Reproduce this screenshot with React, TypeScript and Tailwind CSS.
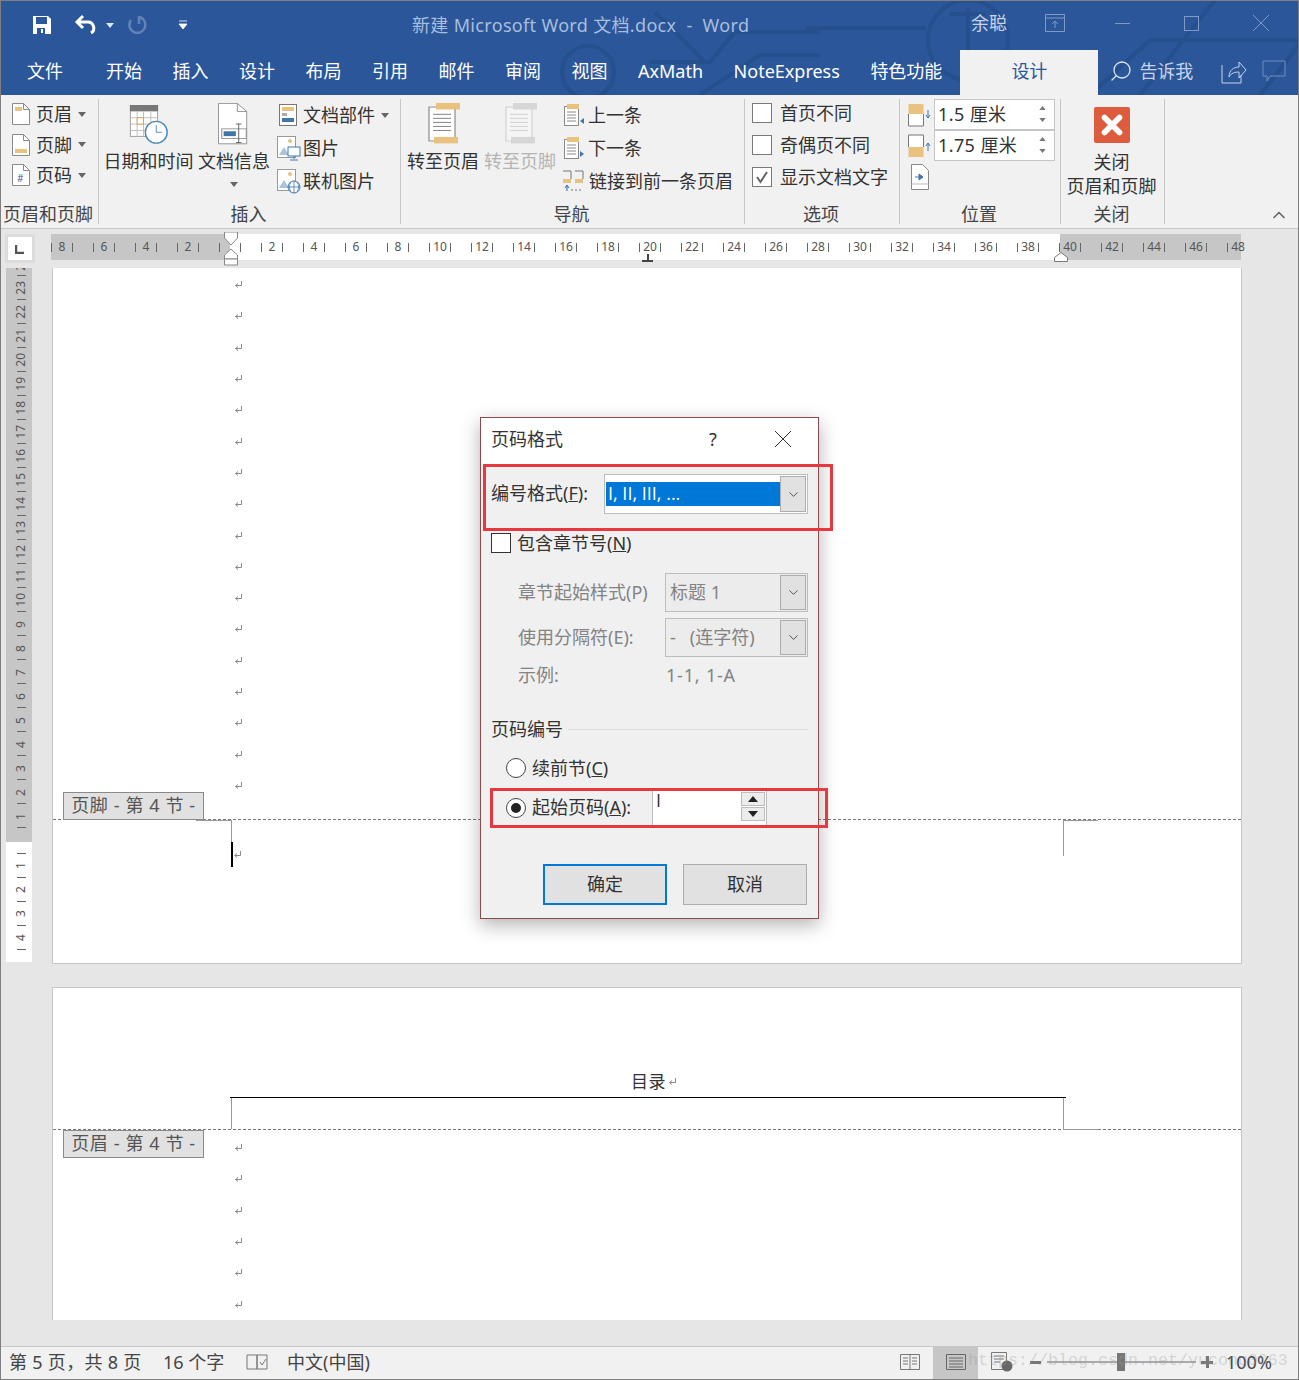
import React from "react";
import { ChevronDown, ChevronUp, X, Search } from "lucide-react";

const tabs = ["开始", "插入", "设计", "布局", "引用", "邮件", "审阅", "视图", "AxMath", "NoteExpress", "特色功能"];
const rulerNums = [8, 6, 4, 2, 0, 2, 4, 6, 8, 10, 12, 14, 16, 18, 20, 22, 24, 26, 28, 30, 32, 34, 36, 38, 40, 42, 44, 46, 48];
const sideNums = [24, 23, 22, 21, 20, 19, 18, 17, 16, 15, 14, 13, 12, 11, 10, 9, 8, 7, 6, 5, 4, 3, 2, 1];

const Caret = ({ color = "#666" }: { color?: string }) => (
  <svg width="8" height="5" viewBox="0 0 8 5" className="shrink-0">
    <path d="M0 0h8L4 5z" fill={color} />
  </svg>
);

const ParaMark = () => (
  <svg width="9" height="9" viewBox="0 0 9 9" className="shrink-0">
    <path d="M7.5 1v4.5H2M4 3.5 1.5 5.5 4 7.5" fill="none" stroke="#8a8a8a" strokeWidth="1" />
  </svg>
);

const PageIcon = ({ band, hash }: { band?: "top" | "bottom"; hash?: boolean }) => (
  <svg width="18" height="22" viewBox="0 0 18 22" className="shrink-0">
    <path d="M.5.5h11l6 6v15H.5z" fill="#fff" stroke="#8a8a8a" />
    <path d="M11.500.5v6h6" fill="none" stroke="#8a8a8a" />
    {band === "top" && <rect x="3" y="4" width="7" height="4" fill="#e8c27e" />}
    {band === "bottom" && <rect x="3" y="15" width="12" height="4" fill="#e8c27e" />}
    {hash && <text x="5" y="18" fontSize="10" fill="#2b6cb0">#</text>}
  </svg>
);

const SmallDoc = ({ up }: { up: boolean }) => (
  <svg width="20" height="24" viewBox="0 0 20 24" className="shrink-0">
    <rect x=".5" y="3.500" width="14" height="19" fill="#fff" stroke="#8a8a8a" />
    <rect x="3" y="1" width="12" height="5" fill="#e8c27e" />
    <path d="M3 9h9M3 12h9M3 15h9M3 18h9" stroke="#8a8a8a" />
    <path d={up ? "M20 15v6l-4-3z" : "M16 15v6l4-3z"} fill="#3f77ad" />
  </svg>
);

const BigDoc = ({ dim }: { dim?: boolean }) => (
  <svg width="34" height="42" viewBox="0 0 34 52" preserveAspectRatio="none" className={dim ? "-mt-[2px] shrink-0 opacity-30" : "-mt-[2px] shrink-0"}>
    <rect x="3" y="5" width="26" height="42" fill="#fff" stroke="#777" />
    <rect x="10" y="0" width="24" height="8" fill={dim ? "#999" : "#e8c27e"} />
    <rect x="8" y="42" width="24" height="8" fill={dim ? "#999" : "#e8c27e"} />
    <path d="M7 14h18M7 19h18M7 24h18M7 29h18M7 34h18" stroke="#777" />
  </svg>
);

const ImageIcon = ({ kind }: { kind: "screen" | "globe" }) => (
  <svg width="24" height="26" viewBox="0 0 24 26" className="-ml-[2px] shrink-0">
    <rect x=".5" y="1.500" width="18" height="21" fill="#fff" stroke="#9a9a9a" />
    <circle cx="13" cy="6" r="2" fill="#e8c27e" />
    <path d="M2 20l5-8 5 8z" fill="#a8c3de" />
    {kind === "screen" ? (
      <>
        <rect x="11" y="12" width="12" height="9" fill="#fff" stroke="#3f77ad" />
        <path d="M17 21v3M13 25h8" stroke="#3f77ad" />
      </>
    ) : (
      <>
        <circle cx="17" cy="19" r="6" fill="#fff" stroke="#3f77ad" />
        <path d="M11 19h12M17 13v12M14 14c-2 3-2 7 0 10M20 14c2 3 2 7 0 10" fill="none" stroke="#3f77ad" strokeWidth=".8" />
      </>
    )}
  </svg>
);

const Spin = () => (
  <div className="mr-[3px] flex h-full w-[17px] flex-col items-center justify-center gap-[8px]">
    <svg width="7" height="4" viewBox="0 0 8 5"><path d="M0 5h8L4 0z" fill="#777" /></svg>
    <svg width="7" height="4" viewBox="0 0 8 5"><path d="M0 0h8L4 5z" fill="#777" /></svg>
  </div>
);

const RibbonGroup = ({ label, width, children }: { label: string; width: string; children: React.ReactNode }) => (
  <div className={`flex h-[125px] shrink-0 flex-col border-r border-[#c6c6c6] ${width}`}>
    <div className="h-[105px]">{children}</div>
    <div className="flex h-[20px] items-center justify-center whitespace-nowrap pr-[2px] text-[#444]">{label}</div>
  </div>
);

const Check = ({ label, checked }: { label: string; checked?: boolean }) => (
  <div className="flex h-[32px] items-center gap-[8px] whitespace-nowrap">
    <div className="flex h-[20px] w-[20px] items-center justify-center border border-[#7a7a7a] bg-white">
      {checked && (
        <svg width="14" height="14" viewBox="0 0 14 14"><path d="M2 7l3.500 5L12 2" fill="none" stroke="#666" strokeWidth="2" /></svg>
      )}
    </div>
    {label}
  </div>
);

const Combo = ({ children, width, disabled }: { children: React.ReactNode; width: string; disabled?: boolean }) => (
  <div className={`flex h-[39px] items-center border border-[#bdbdbd] ${width} ${disabled ? "bg-[#ececec]" : "bg-white"}`}>
    <div className="flex-1 whitespace-nowrap pb-[1px] pl-[4px]">{children}</div>
    <div className="mr-px flex h-[35px] w-[26px] items-center justify-center border border-[#adadad] bg-[#e1e1e1]">
      <ChevronDown size={15} strokeWidth={1.3} color="#333" />
    </div>
  </div>
);

const Radio = ({ checked }: { checked?: boolean }) => (
  <div className="flex h-[20px] w-[20px] items-center justify-center rounded-full border border-[#444] bg-white">
    {checked && <div className="h-[10px] w-[10px] rounded-full bg-[#222]" />}
  </div>
);

const MarkRows = ({ count }: { count: number }) => (
  <>
    {Array.from({ length: count }).map((_, i) => (
      <div key={i} className="flex h-[31.3px] items-center pl-[181px]">
        <ParaMark />
      </div>
    ))}
  </>
);

const SectionTag = ({ text, pos }: { text: string; pos: string }) => (
  <div className={`absolute left-[10px] flex h-[28px] w-[141px] items-center justify-center border border-[#8a8a8a] bg-[#e1e1e1] pb-[2px] whitespace-nowrap tracking-[0.6px] text-[#555] ${pos}`}>
    {text}
  </div>
);

export default function App() {
  return (
    <div className="relative h-[1380px] w-[1299px] overflow-hidden bg-[#e6e6e6] font-['Noto_Sans','Noto_Sans_CJK_SC',sans-serif] text-[18px] leading-none text-[#333]">
      {/* title bar + tabs */}
      <div className="relative h-[95px] bg-[#2b579a]">
        <svg width="1299" height="95" className="absolute left-0 top-0" fill="none" stroke="#264f8e" strokeWidth="4">
          <circle cx="588" cy="72" r="26" />
          <circle cx="968" cy="40" r="40" />
          <path d="M968 8v60M950 14h36" />
          <path d="M655 12l50 50M650 62h60l25-30h85M806 28h120M1090 95l60-55h149M1140 95l75-95M1260 95l39-50M700 95l60-40h60" />
        </svg>
        <div className="relative flex h-[50px] items-center">
          <div className="flex w-[412px] items-center pl-[32px]">
            <svg width="20" height="20" viewBox="0 0 20 20" className="shrink-0">
              <path d="M1 1h15l3 3v15H1z" fill="#fff" />
              <rect x="4" y="2" width="11" height="7" fill="#2b579a" />
              <rect x="5" y="13" width="8" height="6" fill="#2b579a" />
              <rect x="9" y="14" width="2" height="4" fill="#fff" />
            </svg>
            <svg width="24" height="24" viewBox="0 0 24 24" className="ml-[22px] shrink-0" fill="none" stroke="#fff" strokeWidth="3">
              <path d="M9 3 3 9l6 6M3 9h10a6 6 0 0 1 4 11" />
            </svg>
            <div className="ml-[8px]"><Caret color="#dfe7f2" /></div>
            <svg width="22" height="22" viewBox="0 0 22 22" className="ml-[12px] shrink-0" fill="none" stroke="#6283b5" strokeWidth="2.5">
              <path d="M13 2v8M13 3a8 8 0 1 1-8 3" />
            </svg>
            <svg width="10" height="10" viewBox="0 0 10 10" className="ml-[30px] shrink-0">
              <path d="M1 1h8M1 4h8L5 9z" fill="#fff" stroke="#fff" strokeWidth=".8" />
            </svg>
          </div>
          <div className="w-[559px] whitespace-pre tracking-[0.33px] text-[#a9bedd]">新建 Microsoft Word 文档.docx  -  Word</div>
          <div className="flex items-center pb-[4px]">
            <div className="w-[76px] text-[#c6d3e8]">余聪</div>
            <svg width="20" height="18" viewBox="0 0 20 18" fill="none" stroke="#7f9ac4" className="-ml-[2px] shrink-0">
              <path d="M.5.5h19v17H.5zM.5 4h19M10 14V7M7 10l3-3 3 3" />
            </svg>
            <div className="ml-[50px] h-px w-[15px] bg-[#7f9ac4]" />
            <div className="ml-[54px] h-[15px] w-[15px] border border-[#7f9ac4]" />
            <svg width="18" height="18" viewBox="0 0 18 18" fill="none" stroke="#7f9ac4" className="ml-[53px] shrink-0">
              <path d="M1 1l16 16M17 1 1 17" />
            </svg>
          </div>
        </div>
        <div className="relative flex h-[45px] items-center pb-[3px] pl-[27px] text-[#fff]">
          <div className="mr-[43px]">文件</div>
          <div className="flex items-center gap-[30.5px] whitespace-nowrap">
            {tabs.map((t) => (
              <div key={t}>{t}</div>
            ))}
          </div>
          <div className="-mb-[3px] ml-[18px] flex h-[45px] w-[138px] items-center justify-center bg-[#f1f1f1] pb-[3px] text-[#2b579a]">设计</div>
          <Search size={24} strokeWidth={1.3} color="#dfe7f2" className="ml-[11px] -scale-x-100" />
          <div className="ml-[6px] text-[#c6d3e8]">告诉我</div>
          <svg width="26" height="26" viewBox="0 0 26 26" fill="none" stroke="#c6d3e8" className="ml-[28px] shrink-0">
            <path d="M1 7v18h19v-8M8 19c0-7 5-10 10-10V4l7 8-7 8v-6c-4 0-8 1-10 5z" />
          </svg>
          <svg width="24" height="22" viewBox="0 0 24 22" fill="none" stroke="#6f8dbc" className="ml-[15px] shrink-0">
            <path d="M1 1h22v15H8l-3 5v-5H1z" />
          </svg>
        </div>
      </div>

      {/* ribbon */}
      <div className="relative flex h-[133px] bg-[#f1f1f1] pt-[4px]">
        <RibbonGroup label="页眉和页脚" width="w-[99px]">
          <div className="flex flex-col pl-[12px]">
            <div className="flex h-[31px] items-center gap-[6px] pb-[1px]"><PageIcon band="top" />页眉<Caret /></div>
            <div className="flex h-[30px] items-center gap-[6px] pb-[1px]"><PageIcon band="bottom" />页脚<Caret /></div>
            <div className="flex h-[31px] items-center gap-[6px] pb-[1px]"><PageIcon hash />页码<Caret /></div>
          </div>
        </RibbonGroup>
        <RibbonGroup label="插入" width="w-[302px]">
          <div className="flex pt-[6px] pl-[5px]">
            <div className="flex w-[89px] flex-col items-center whitespace-nowrap">
              <svg width="42" height="40" viewBox="0 0 42 44" className="shrink-0">
                <rect x=".5" y=".5" width="30" height="34" fill="#fff" stroke="#999" />
                <rect x="0" y="0" width="31" height="7" fill="#777" />
                <path d="M.5 14h30M.5 21h30M.5 28h30M8 7v27M15 7v27M23 7v27" stroke="#bbb" />
                <rect x="8" y="14" width="7" height="7" fill="#fff" stroke="#e39a3c" />
                <circle cx="29" cy="30" r="12" fill="#fff" stroke="#4a86b8" strokeWidth="1.5" />
                <path d="M29 22v8h6" fill="none" stroke="#4a86b8" />
              </svg>
              <div className="mt-[7px]">日期和时间</div>
            </div>
            <div className="ml-[5px] flex w-[72px] flex-col items-center whitespace-nowrap">
              <svg width="32" height="42" viewBox="0 0 34 52" preserveAspectRatio="none" className="-mt-[2px] shrink-0">
                <path d="M.5.5h20l10 10v40H.5z" fill="#fff" stroke="#888" />
                <path d="M20.500.5v10h10" fill="none" stroke="#888" />
                <rect x="4" y="32" width="26" height="12" fill="#fff" stroke="#888" />
                <rect x="6" y="35" width="13" height="6" fill="#3f77ad" />
                <path d="M22 26v23M19 26h6M19 49h6" stroke="#555" />
              </svg>
              <div className="mt-[7px]">文档信息</div>
              <div className="mt-[12px]"><Caret /></div>
            </div>
            <div className="ml-[9px] flex -mt-[6px] flex-col">
              <div className="flex h-[33px] items-center whitespace-nowrap pb-[1px]">
                <svg width="18" height="22" viewBox="0 0 18 22" className="shrink-0">
                  <rect x=".5" y=".5" width="17" height="21" fill="#fff" stroke="#777" />
                  <rect x="3" y="3" width="12" height="4" fill="#e8c27e" />
                  <rect x="3" y="9" width="5" height="3" fill="#aaa" />
                  <rect x="3" y="14" width="12" height="4" fill="#3f77ad" />
                </svg>
                <span className="mx-[6px]">文档部件</span><Caret />
              </div>
              <div className="flex h-[33px] items-center gap-[2px] whitespace-nowrap pb-[1px]"><ImageIcon kind="screen" />图片</div>
              <div className="flex h-[33px] items-center gap-[2px] whitespace-nowrap pb-[1px]"><ImageIcon kind="globe" />联机图片</div>
            </div>
          </div>
        </RibbonGroup>
        <RibbonGroup label="导航" width="w-[344px]">
          <div className="flex pl-[6px] pt-[6px]">
            <div className="flex w-[72px] flex-col items-center whitespace-nowrap">
              <BigDoc />
              <div className="mt-[7px]">转至页眉</div>
            </div>
            <div className="ml-[5px] flex w-[72px] flex-col items-center whitespace-nowrap text-[#b4b4b4]">
              <BigDoc dim />
              <div className="mt-[7px]">转至页脚</div>
            </div>
            <div className="ml-[8px] -mt-[6px] flex flex-col whitespace-nowrap">
              <div className="flex h-[33px] items-center gap-[4px] pb-[1px]"><SmallDoc up />上一条</div>
              <div className="flex h-[33px] items-center gap-[4px] pb-[1px]"><SmallDoc up={false} />下一条</div>
              <div className="flex h-[33px] items-center gap-[5px] pb-[1px]">
                <svg width="22" height="22" viewBox="0 0 22 22" className="-ml-[2px] shrink-0">
                  <path d="M1 1h8v8M13 1h8v8" fill="none" stroke="#777" />
                  <rect x="1" y="9" width="8" height="4" fill="#e8c27e" />
                  <rect x="13" y="9" width="8" height="4" fill="#e8c27e" />
                  <path d="M5 21v-5M3 18l2-3 2 3" fill="none" stroke="#2b6cb0" />
                  <path d="M9 20h12" stroke="#777" strokeDasharray="2 2" />
                </svg>
                链接到前一条页眉
              </div>
            </div>
          </div>
        </RibbonGroup>
        <RibbonGroup label="选项" width="w-[155px]">
          <div className="-mt-[2px] pl-[7px]">
            <Check label="首页不同" />
            <Check label="奇偶页不同" />
            <Check label="显示文档文字" checked />
          </div>
        </RibbonGroup>
        <RibbonGroup label="位置" width="w-[161px]">
          <div className="flex flex-col pl-[8px]">
            <div className="flex items-center gap-[3px]">
              <svg width="23" height="26" viewBox="0 0 23 26" className="shrink-0">
                <rect x=".5" y="2" width="15" height="10" fill="#e8c27e" />
                <path d="M.5 12v12h15V12" fill="#fff" stroke="#777" />
                <path d="M20 8v8M18 13l2 3 2-3" fill="none" stroke="#3f77ad" />
              </svg>
              <div className="flex h-[31px] w-[121px] items-center justify-between border border-[#c6c6c6] bg-white pb-[1px] pl-[3px] whitespace-nowrap tracking-[0.4px]">1.5 厘米<Spin /></div>
            </div>
            <div className="flex items-center gap-[3px]">
              <svg width="23" height="26" viewBox="0 0 23 26" className="shrink-0">
                <path d="M.5 14V2h15v12" fill="#fff" stroke="#777" />
                <rect x=".5" y="14" width="15" height="10" fill="#e8c27e" />
                <path d="M20 18v-8M18 13l2-3 2 3" fill="none" stroke="#3f77ad" />
              </svg>
              <div className="flex h-[31px] w-[121px] items-center justify-between border border-[#c6c6c6] bg-white pb-[1px] pl-[3px] whitespace-nowrap tracking-[0.4px]">1.75 厘米<Spin /></div>
            </div>
            <svg width="18" height="26" viewBox="0 0 18 26" className="ml-[3px] mt-[3px] shrink-0">
              <path d="M.5.5h11l6 6v19H.5z" fill="#fff" stroke="#888" />
              <path d="M.5 20h17" stroke="#bbb" />
              <path d="M4 13h6M8 10l4 3-4 3z" fill="#3f77ad" stroke="#3f77ad" />
            </svg>
          </div>
        </RibbonGroup>
        <RibbonGroup label="关闭" width="w-[104px]">
          <div className="flex flex-col items-center whitespace-nowrap pr-[2px] pt-[8px]">
            <div className="flex h-[36px] w-[36px] items-center justify-center rounded-[2px] bg-[#de5c3e]">
              <X size={30} strokeWidth={4.5} color="#fff" />
            </div>
            <div className="mt-[7px] h-[24px] leading-[24px]">关闭</div>
            <div className="h-[24px] leading-[24px]">页眉和页脚</div>
          </div>
        </RibbonGroup>
        <ChevronUp size={20} strokeWidth={2} color="#666" className="absolute left-[1269px] top-[110px]" />
      </div>
      <div className="h-px bg-[#c6c6c6]" />

      {/* horizontal ruler */}
      <div className="flex h-[39px] bg-[#e6e6e6] pt-[5px]">
        <div className="ml-[5px] flex h-[29px] w-[30px] items-center justify-center border-[3px] border-[#dcdcdc] bg-white">
          <svg width="10" height="10" viewBox="0 0 10 10"><path d="M1 1v8h8" fill="none" stroke="#555" strokeWidth="2.5" /></svg>
        </div>
        <div className="relative ml-[16px] h-[26px] w-[1190px]">
          <div className="flex h-full">
            <div className="w-[179px] bg-[#c6c6c6]" />
            <div className="w-[830px] bg-white" />
            <div className="flex-1 bg-[#c6c6c6]" />
          </div>
          <div className="absolute left-[-10px] top-0 flex h-full">
            {rulerNums.map((n, i) => (
              <div key={i} className="flex w-[42px] shrink-0 items-center justify-between px-[10px] text-[12px] text-[#555]">
                <div className="h-[9px] w-px bg-[#666]" />
                {n > 0 && <span>{n}</span>}
                <div className={i === rulerNums.length - 1 ? "h-[9px] w-px" : "h-[9px] w-px bg-[#666]"} />
              </div>
            ))}
          </div>
          <svg width="14" height="34" viewBox="0 0 14 34" className="absolute left-[173px] -top-[2px]">
            <path d="M.5 0h13v6L7 13 .5 6z" fill="#fff" stroke="#888" />
            <path d="M7 17l6.500 6v4H.5v-4z" fill="#fff" stroke="#888" />
            <path d="M.5 27h13v6H.5z" fill="#fff" stroke="#888" />
          </svg>
          <div className="absolute left-[591px] top-[26px] h-[2px] w-[11px] bg-[#444]" />
          <div className="absolute left-[596px] top-[20px] h-[6px] w-[2px] bg-[#444]" />
          <svg width="14" height="10" viewBox="0 0 14 10" className="absolute left-[1003px] top-[18px]">
            <path d="M.5 9.500v-4L7 .5l6.500 5v4z" fill="#fff" stroke="#777" />
          </svg>
        </div>
      </div>

      {/* document area */}
      <div className="flex h-[1078px]">
        <div className="w-[52px] shrink-0 pl-[6px]">
          <div className="flex h-[694px] w-[26px] flex-col overflow-hidden">
            <div className="h-[574px] shrink-0 overflow-hidden bg-[#c6c6c6]">
              <div className="-mt-[16px]">
                {sideNums.map((n) => (
                  <div key={n} className="relative flex h-[24px] items-center justify-center pl-[3px] text-[12px] text-[#555]">
                    <span className="[writing-mode:vertical-rl] rotate-180">{n}</span>
                    <div className="absolute bottom-0 left-[11px] h-px w-[9px] bg-[#666]" />
                  </div>
                ))}
              </div>
            </div>
            <div className="flex-1 bg-white pt-[11px]">
              {[1, 2, 3, 4].map((n) => (
                <div key={n} className="relative flex h-[24px] items-center justify-center pl-[3px] text-[12px] text-[#555]">
                  <span className="[writing-mode:vertical-rl] rotate-180">{n}</span>
                  <div className="absolute top-0 left-[11px] h-px w-[9px] bg-[#666]" />
                </div>
              ))}
              <div className="ml-[11px] h-px w-[9px] bg-[#666]" />
            </div>
          </div>
        </div>
        <div className="w-[1190px] shrink-0">
          <div className="h-[696px] border-x border-b border-[#c6c6c6] bg-white pt-[1px]">
            <MarkRows count={17} />
            <div className="relative mt-[18px] border-t border-dashed border-[#777]">
              <SectionTag text="页脚 - 第 4 节 -" pos="bottom-0" />
            </div>
            <div className="flex justify-between">
              <div className="relative ml-[143px] h-[36px] w-[36px] border-r border-t border-[#999]">
                <div className="absolute left-[35px] top-[21px] h-[25px] w-[2px] bg-black" />
                <div className="absolute left-[37px] top-[29px]"><ParaMark /></div>
              </div>
              <div className="mr-[143px] h-[36px] w-[35px] border-l border-t border-[#999]" />
            </div>
          </div>
          <div className="mt-[23px] h-[333px] border-x border-t border-[#c6c6c6] bg-white pt-[81px]">
            <div className="flex h-[24px] items-center justify-center gap-[2px] pl-[14px] text-[17px] tracking-[0.5px]">目录<ParaMark /></div>
            <div className="ml-[177px] mt-[4px] w-[836px] border-t border-black">
              <div className="ml-px mr-[2px] h-[31px] border-x border-[#999]" />
            </div>
            <div className="relative border-t border-dashed border-[#777]">
              <div className="absolute left-[1010px] -top-px h-px w-[35px] bg-[#999]" />
              <SectionTag text="页眉 - 第 4 节 -" pos="top-0" />
            </div>
            <div className="pt-[2px]"><MarkRows count={6} /></div>
          </div>
        </div>
      </div>

      {/* status bar */}
      <div className="absolute bottom-0 left-0 flex h-[34px] w-full items-center border-t border-[#c6c6c6] bg-[#f1f1f1] pb-[3px] text-[#444]">
        <div className="ml-[9px] w-[154px] whitespace-nowrap tracking-[0.3px]">第 5 页，共 8 页</div>
        <div className="w-[83px] whitespace-nowrap">16 个字</div>
        <svg width="22" height="20" viewBox="0 0 22 20" fill="none" stroke="#777" className="shrink-0">
          <path d="M11 3H1v14h10zM11 3h10v14H11zM14 10l2 3 4-6" />
        </svg>
        <div className="ml-[19px] w-[613px] whitespace-nowrap">中文(中国)</div>
        <svg width="20" height="18" viewBox="0 0 20 18" fill="none" stroke="#777" className="shrink-0">
          <path d="M.5 1.500h19v15H.5zM10 1.500v15M3 5h5M3 8h5M3 11h5M12 5h5M12 8h5M12 11h5" />
        </svg>
        <div className="-mb-[3px] ml-[13px] flex h-[33px] w-[45px] items-center justify-center bg-[#c6c6c6] pb-[3px]">
          <svg width="20" height="18" viewBox="0 0 20 18" fill="none" stroke="#666"><path d="M.5 1.500h19v15H.5zM3 5h14M3 8h14M3 11h14M3 14h14" /></svg>
        </div>
        <svg width="22" height="20" viewBox="0 0 22 20" className="ml-[13px] shrink-0">
          <path d="M.5.5h15v17H.5zM3 4h10M3 7h10M3 10h6" fill="none" stroke="#777" />
          <circle cx="16" cy="14" r="5.500" fill="#666" />
        </svg>
        <div className="ml-[17px] h-[3px] w-[11px] bg-[#777]" />
        <div className="relative ml-[6px] h-[2px] w-[149px] bg-[#aaa]">
          <div className="absolute left-[70px] -top-[8px] h-[18px] w-[8px] bg-[#777]" />
        </div>
        <div className="relative ml-[5px] h-[3px] w-[12px] bg-[#777]">
          <div className="absolute left-[4.500px] -top-[4.500px] h-[12px] w-[3px] bg-[#777]" />
        </div>
        <div className="ml-[13px] whitespace-nowrap">100%</div>
        <div className="absolute left-[968px] top-[6px] whitespace-nowrap font-['Liberation_Mono',monospace] text-[16.67px] text-[#9a9a9a]/35">https://blog.csdn.net/yucong0063</div>
      </div>

      {/* page number dialog */}
      <div className="absolute left-[480px] top-[417px] h-[502px] w-[339px] border border-[#8c4a4a] bg-[#f0f0f0] shadow-[0_6px_18px_rgba(0,0,0,0.3)]">
        <div className="flex h-[46px] items-center bg-white pb-[4px] pl-[10px]">
          <div className="w-[218px]">页码格式</div>
          <div className="w-[65px]">?</div>
          <svg width="18" height="18" viewBox="0 0 18 18" fill="none" stroke="#333" className="shrink-0">
            <path d="M1 1l16 16M17 1 1 17" />
          </svg>
        </div>
        <div className="pl-[10px] pr-[10px]">
          <div className="mt-[10px] flex h-[40px] items-center">
            <div className="w-[113px] whitespace-nowrap pb-[2px]">编号格式(<span className="underline">F</span>):</div>
            <div className="flex h-[40px] w-[204px] items-center border border-[#bdbdbd] bg-white pl-px">
              <div className="flex h-[24px] flex-1 items-center bg-[#0078d7] pb-[2px] pl-[2px] font-['Open_Sans',sans-serif] text-[18px] text-white">I, II, III, ...</div>
              <div className="mr-px flex h-[36px] w-[26px] items-center justify-center border border-[#adadad] bg-[#e1e1e1]">
                <ChevronDown size={15} strokeWidth={1.3} color="#333" />
              </div>
            </div>
          </div>
          <div className="mt-[19px] flex h-[20px] items-center gap-[6px]">
            <div className="h-[20px] w-[20px] border border-[#333] bg-white" />
            <div>包含章节号(<span className="underline">N</span>)</div>
          </div>
          <div className="mt-[20px] flex items-center pl-[27px] text-[#838383]">
            <div className="w-[147px] whitespace-nowrap pb-[1px]">章节起始样式(P)</div>
            <Combo width="w-[143px]" disabled>标题 1</Combo>
          </div>
          <div className="mt-[6px] flex items-center pl-[27px] text-[#838383]">
            <div className="w-[147px] whitespace-nowrap pb-[1px]">使用分隔符(E):</div>
            <Combo width="w-[143px]" disabled>
              <span className="whitespace-pre">-   (连字符)</span>
            </Combo>
          </div>
          <div className="mt-[5px] flex h-[26px] items-center pl-[27px] text-[#838383]">
            <div className="w-[148px]">示例:</div>
            <div className="tracking-[0.8px]">1-1, 1-A</div>
          </div>
          <div className="mt-[30px] flex h-[22px] items-center gap-[5px]">
            <div className="whitespace-nowrap">页码编号</div>
            <div className="h-px flex-1 bg-[#dcdcdc]" />
          </div>
          <div className="mt-[18px] flex h-[20px] items-center gap-[6px] pl-[15px]">
            <Radio />
            <div>续前节(<span className="underline">C</span>)</div>
          </div>
          <div className="mt-[13px] flex h-[34px] items-center gap-[6px] pl-[15px]">
            <Radio checked />
            <div className="w-[114px] whitespace-nowrap pb-[2px]">起始页码(<span className="underline">A</span>):</div>
            <div className="flex h-[34px] w-[115px] items-start justify-between border-x border-[#bdbdbd] bg-white pl-[3px] pr-px">
              <span className="font-['Open_Sans',sans-serif]">I</span>
              <div className="flex flex-col gap-px pt-px">
                <div className="flex h-[14px] w-[24px] items-center justify-center border border-[#bdbdbd] bg-[#ececec]">
                  <svg width="10" height="6" viewBox="0 0 10 6"><path d="M0 6h10L5 0z" fill="#222" /></svg>
                </div>
                <div className="flex h-[14px] w-[24px] items-center justify-center border border-[#bdbdbd] bg-[#ececec]">
                  <svg width="10" height="6" viewBox="0 0 10 6"><path d="M0 0h10L5 6z" fill="#222" /></svg>
                </div>
              </div>
            </div>
          </div>
          <div className="mt-[39px] flex justify-end gap-[16px] pr-px">
            <div className="flex h-[41px] w-[124px] items-center justify-center border-2 border-[#0078d7] bg-[#e1e1e1] pb-[2px]">确定</div>
            <div className="flex h-[41px] w-[124px] items-center justify-center border border-[#adadad] bg-[#e1e1e1] pb-[2px]">取消</div>
          </div>
        </div>
        <div className="absolute left-[2px] top-[46px] h-[67px] w-[350px] border-[3px] border-[#e5393f]" />
        <div className="absolute left-[9px] top-[370px] h-[40px] w-[338px] border-[3px] border-[#e5393f]" />
      </div>

      {/* window frame */}
      <div className="pointer-events-none absolute inset-0 border border-[#7f7f7f]" />
    </div>
  );
}
